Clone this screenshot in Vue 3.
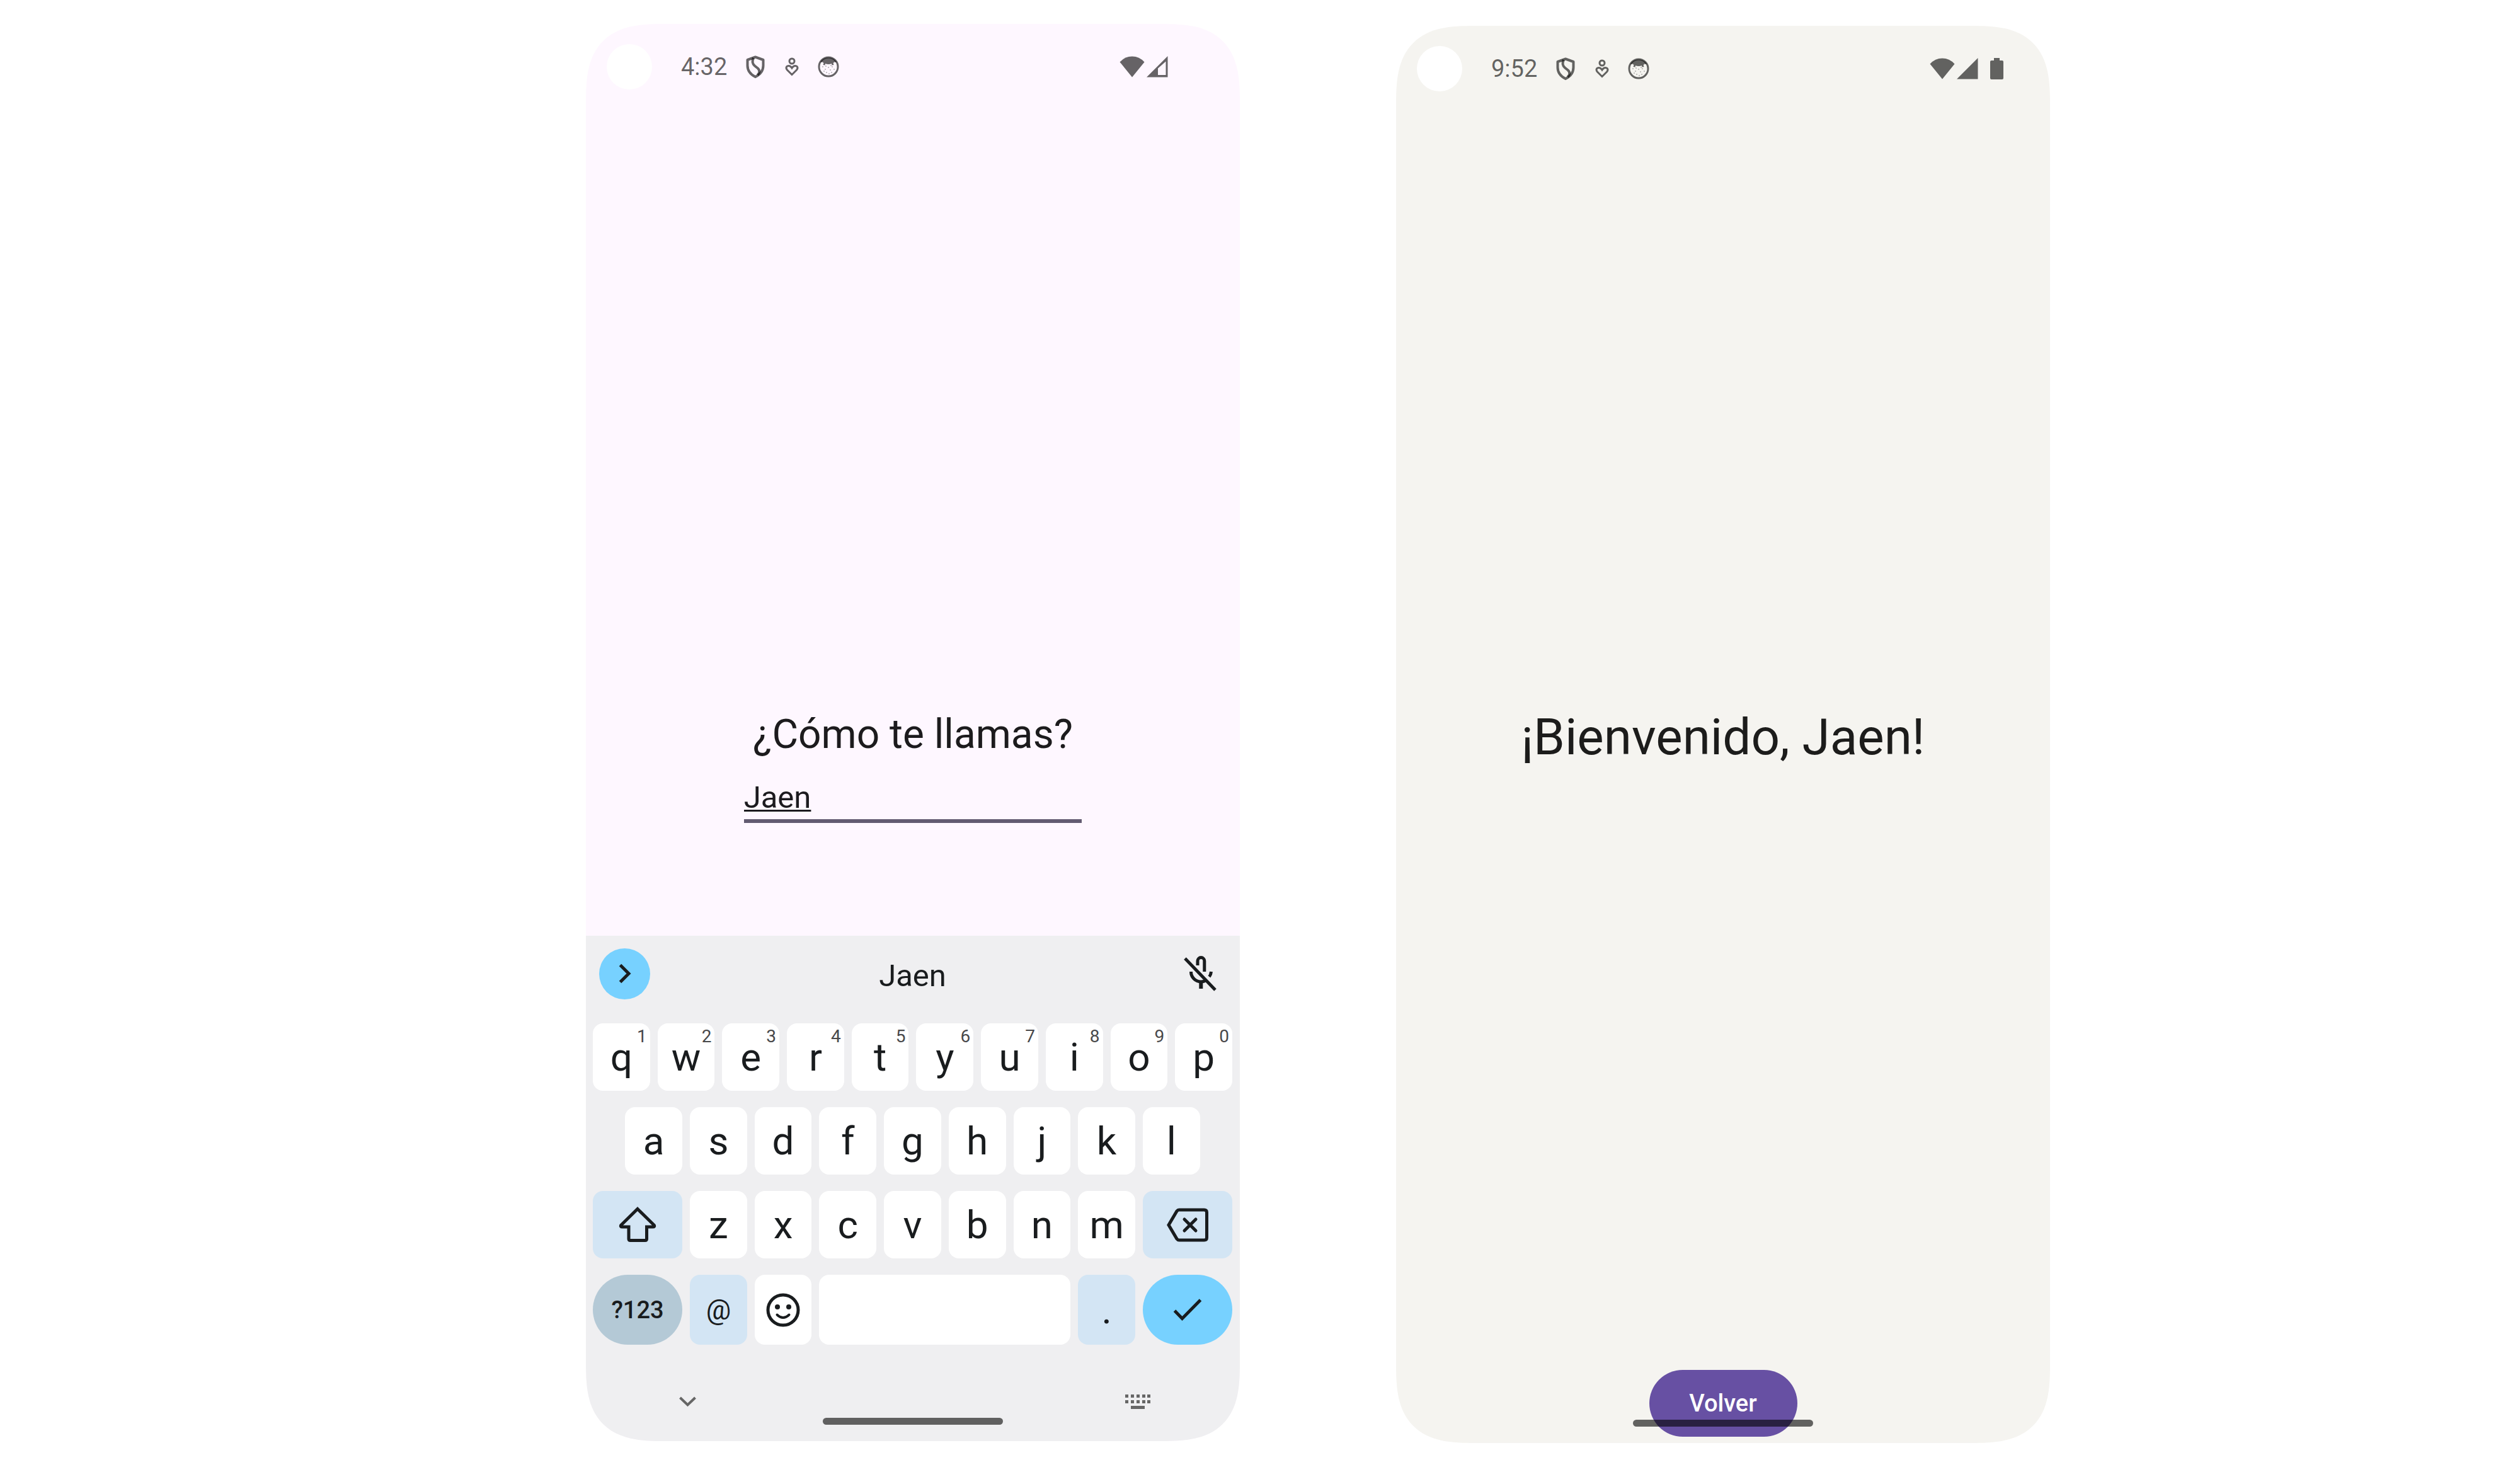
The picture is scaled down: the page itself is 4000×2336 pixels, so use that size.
<script setup>
import { ref } from 'vue'

const name = ref('Jaen')
const topRow = [...'qwertyuiop'].map((letter, i) => ({ letter, hint: (i + 1) % 10 }))
const middleRow = [...'asdfghjkl']
const bottomRow = [...'zxcvbnm']
const phones = [
  { id: 'ask', time: '4:32' },
  { id: 'welcome', time: '9:52' },
]
const dots = [[9, 18], [13, 22], [18, 19], [21, 23], [24, 18], [27, 22], [15, 27], [19, 29], [23, 27], [11, 25], [22, 16], [14, 17]]
const keyColumns = [0, 9, 18, 27, 35]
</script>

<template>
  <main class="page">
    <section v-for="phone in phones" :key="phone.id" class="phone" :class="phone.id">
      <header class="status">
        <span class="camera"></span>
        <time class="clock">{{ phone.time }}</time>
        <span class="notices">
          <svg width="36" height="36" viewBox="0 0 36 36" fill="none" stroke="currentColor" stroke-width="4" stroke-linejoin="round">
            <path d="M18 2.5L30.500 7V16C30.500 25 25 30.500 18 34C11 30.500 5.500 25 5.500 16V7Z" />
            <path d="M15 4C12.500 9 13 13 17 16.500L22 20.500C25.500 24 24.500 28 21.500 31" />
          </svg>
          <svg width="36" height="36" viewBox="0 0 36 36" fill="none" stroke="currentColor" stroke-width="3">
            <circle cx="18" cy="9" r="4" />
            <path d="M18 30.500L10.500 23C7.500 19.500 9.500 16.500 13 16.500C15.500 16.500 17 18.500 18 20C19 18.500 20.500 16.500 23 16.500C26.500 16.500 28.500 19.500 25.500 23Z" />
          </svg>
          <svg width="36" height="36" viewBox="0 0 36 36">
            <circle cx="18" cy="18" r="15" fill="none" stroke="currentColor" stroke-width="3" />
            <path d="M5 11C9 1 27 1 31 11L27.500 10.500L25.500 12L26.500 15L23.500 15.500L23 13Q18 15 13 13L12.500 15.500L9.500 15L10.500 12L8.500 10.500Z" fill="currentColor" />
            <circle v-for="(dot, i) in dots" :key="i" :cx="dot[0]" :cy="dot[1]" r="0.700" fill="currentColor" />
          </svg>
        </span>
        <span class="signals">
          <svg width="40" height="34" viewBox="0 0 40 34" fill="currentColor">
            <path d="M20 33.500L.5 9.500Q8.500 .5 20 .5T39.500 9.500Z" />
          </svg>
          <svg width="34" height="34" viewBox="0 0 34 34" fill="currentColor">
            <path v-if="phone.id === 'ask'" fill-rule="evenodd" d="M0 33.500H33.500V0ZM18 19.500L30.500 8.500V30H18Z" />
            <path v-else d="M0 33.500H33.500V0Z" />
          </svg>
          <svg class="battery" width="21" height="34" viewBox="0 0 21 34" fill="currentColor">
            <path v-if="phone.id === 'welcome'" d="M6 0h9v4h4q2 0 2 2v26q0 2-2 2H2q-2 0-2-2V6q0-2 2-2h4z" />
          </svg>
        </span>
      </header>

      <template v-if="phone.id === 'ask'">
        <form class="question" @submit.prevent>
          <label class="prompt" for="name">¿Cómo te llamas?</label>
          <input id="name" v-model="name" class="field" type="text" autocomplete="off" spellcheck="false" />
        </form>

        <div class="keyboard">
          <div class="toolbar">
            <button class="round" type="button" aria-label="Más opciones">
              <svg width="20" height="32" viewBox="0 0 20 32" fill="none" stroke="currentColor" stroke-width="5">
                <path d="M2.500 2.500L16 16L2.500 29.500" />
              </svg>
            </button>
            <button class="suggestion" type="button">Jaen</button>
            <button class="mic" type="button" aria-label="Micrófono desactivado">
              <svg width="54" height="56" viewBox="0 0 54 56" fill="none" stroke="currentColor" stroke-width="5">
                <path d="M3 4L51 54" />
                <path d="M23 15V8A5.400 5.400 0 0 1 33.800 8V25" />
                <path d="M12.500 25A15.800 15.800 0 0 0 28.300 41Q33 41 37 38" />
                <path d="M44.500 25Q44 30 41.500 33" />
                <path d="M28.300 40V52" stroke-width="6" />
              </svg>
            </button>
          </div>

          <div class="keys">
            <div class="row">
              <button v-for="key in topRow" :key="key.letter" class="key" type="button">
                {{ key.letter }}<span class="hint">{{ key.hint }}</span>
              </button>
            </div>
            <div class="row inset">
              <button v-for="letter in middleRow" :key="letter" class="key" type="button">{{ letter }}</button>
            </div>
            <div class="row">
              <button class="key wide soft" type="button" aria-label="Mayúsculas">
                <svg width="60" height="60" viewBox="0 0 60 60" fill="none" stroke="currentColor" stroke-width="5">
                  <path d="M30 4.500L56 30Q58 33 54 33H44.500V52Q44.500 54.500 42 54.500H18.500Q16 54.500 16 52V33H6Q2 33 4 30Z" />
                </svg>
              </button>
              <button v-for="letter in bottomRow" :key="letter" class="key" type="button">{{ letter }}</button>
              <button class="key wide soft" type="button" aria-label="Borrar">
                <svg width="68" height="54" viewBox="0 0 68 54" fill="none" stroke="currentColor" stroke-width="5">
                  <path d="M20.500 3H60.500Q64.500 3 64.500 7V47Q64.500 51 60.500 51H20.500Q18.500 51 17 49L4 27L17 5Q18.500 3 20.500 3Z" />
                  <path d="M29 18L47 36M47 18L29 36" stroke-linecap="round" />
                </svg>
              </button>
            </div>
            <div class="row tall">
              <button class="key wide pill symbols" type="button">?123</button>
              <button class="key soft at" type="button">@</button>
              <button class="key" type="button" aria-label="Emojis">
                <svg width="54" height="54" viewBox="0 0 54 54" fill="none" stroke="currentColor">
                  <circle cx="27" cy="27" r="24" stroke-width="5" />
                  <circle cx="18" cy="22" r="4" fill="currentColor" stroke="none" />
                  <circle cx="36" cy="22" r="4" fill="currentColor" stroke="none" />
                  <path d="M17.500 34.500Q27 43.500 36.500 34.500" stroke-width="4" stroke-linecap="round" />
                </svg>
              </button>
              <button class="key space" type="button" aria-label="Espacio"></button>
              <button class="key soft" type="button">.</button>
              <button class="key wide pill accept" type="button" aria-label="Aceptar">
                <svg width="46" height="36" viewBox="0 0 46 36" fill="none" stroke="currentColor" stroke-width="5">
                  <path d="M2.500 19L14.500 31.500L43.500 2" />
                </svg>
              </button>
            </div>
          </div>

          <div class="nav">
            <button type="button" aria-label="Ocultar teclado">
              <svg width="27" height="17" viewBox="0 0 27 17" fill="none" stroke="currentColor" stroke-width="4">
                <path d="M1.500 2L13.500 13.500L25.500 2" />
              </svg>
            </button>
            <button type="button" aria-label="Cambiar teclado">
              <svg width="40" height="23" viewBox="0 0 40 23" fill="currentColor">
                <g v-for="x in keyColumns" :key="x">
                  <rect :x="x" y="0" width="5" height="5" />
                  <rect :x="x" y="9" width="5" height="5" />
                </g>
                <rect x="9" y="18" width="22" height="5" />
              </svg>
            </button>
          </div>
        </div>
      </template>

      <div v-else class="greeting">
        <h1 class="title">¡Bienvenido, {{ name }}!</h1>
        <button class="back" type="button">Volver</button>
      </div>

      <span class="home"></span>
    </section>
  </main>
</template>

<style>
body {
  margin: 0;
  background: #fff;
}
</style>

<style scoped>
.page {
  display: grid;
  grid-template-columns: 930fr 1038fr 248fr 1038fr 746fr;
  align-items: start;
  box-sizing: border-box;
  min-height: 100vh;
  padding-top: 38px;
  font-family: Roboto, "Liberation Sans", sans-serif;
  color: #191c1e;
}
button {
  display: flex;
  align-items: center;
  justify-content: center;
  padding: 0;
  border: 0;
  background: none;
  color: inherit;
  font: inherit;
}
svg {
  display: block;
  flex: none;
}
.phone {
  position: relative;
  display: flex;
  flex-direction: column;
  aspect-ratio: 1038 / 2249;
  overflow: hidden;
  border-radius: 100px;
}
@supports (corner-shape: squircle) {
  .phone {
    border-radius: 125px;
    corner-shape: superellipse(1.5);
  }
}
.ask {
  grid-column: 2;
  background: #fef7ff;
}
.welcome {
  grid-column: 4;
  margin-top: 3px;
  background: #f5f4f0;
}
.status {
  display: flex;
  align-items: center;
  height: 136px;
  padding: 0 74px 0 33px;
  color: rgba(0, 0, 0, 0.6);
}
.camera {
  width: 72px;
  height: 72px;
  margin-right: 46px;
  border-radius: 50%;
  background: #fff;
}
.clock {
  margin-right: 27px;
  font-size: 38px;
}
.notices {
  display: flex;
  gap: 22px;
}
.signals {
  display: flex;
  gap: 3px;
  margin-left: auto;
}
.battery {
  margin-left: 16px;
}
.question {
  display: flex;
  flex: 1;
  flex-direction: column;
  align-items: center;
  gap: 26px;
  padding-top: 954px;
}
.prompt {
  color: #1c1b1d;
  font-size: 64px;
  line-height: 76px;
}
.field {
  width: 51.7%;
  height: 70px;
  padding: 0;
  border: 0;
  border-bottom: 6px solid #635b72;
  outline: 0;
  background: none;
  color: #1c1b1f;
  font: inherit;
  font-size: 49px;
  text-decoration: underline 3px;
  text-underline-offset: 3px;
}
.keyboard {
  padding: 0 12px 43px 11px;
  background: #efeff1;
}
.toolbar {
  display: flex;
  align-items: center;
  justify-content: space-between;
  height: 120px;
  margin-bottom: 19px;
  padding: 0 10px;
}
.round,
.mic {
  width: 81px;
  height: 81px;
  border-radius: 50%;
}
.round {
  background: #77d1ff;
}
.suggestion {
  padding-top: 6px;
  font-size: 49px;
}
.keys {
  display: flex;
  flex-direction: column;
  gap: 26px;
}
.row {
  display: grid;
  grid-template-columns: repeat(20, 1fr);
  gap: 12px;
}
.key {
  position: relative;
  grid-column: span 2;
  height: 107px;
  border-radius: 16px;
  background: #fff;
  font-size: 62px;
  line-height: 72px;
}
.inset > .key:first-child {
  grid-column: 2 / span 2;
}
.tall > .key {
  height: 111px;
}
.row > .wide {
  grid-column: span 3;
}
.row > .space {
  grid-column: span 8;
}
.hint {
  position: absolute;
  top: 5px;
  right: 5px;
  color: #48484a;
  font-size: 28px;
  line-height: 32px;
}
.soft {
  background: #d3e5f4;
}
.pill {
  border-radius: 56px;
}
.symbols {
  background: #b4c9d6;
  font-size: 38px;
  font-weight: 500;
}
.at {
  font-size: 44px;
}
.accept {
  background: #77d1ff;
}
.nav {
  display: flex;
  justify-content: space-between;
  margin-top: 70px;
  padding: 0 130px;
  color: #666;
}
.nav > button {
  width: 40px;
  height: 40px;
}
.greeting {
  display: flex;
  flex: 1;
  flex-direction: column;
  align-items: center;
  justify-content: space-between;
  padding: 945px 0 10px;
}
.title {
  margin: 0;
  color: #1c1c1b;
  font-size: 80px;
  font-weight: 400;
  line-height: 96px;
}
.back {
  width: 235px;
  height: 106px;
  border-radius: 53px;
  background: #6750a3;
  color: #fff;
  font-size: 38px;
  font-weight: 500;
}
.home {
  position: absolute;
  bottom: 26px;
  left: 50%;
  width: 286px;
  height: 11px;
  border-radius: 6px;
  background: rgba(0, 0, 0, 0.6);
  transform: translateX(-50%);
}
</style>
